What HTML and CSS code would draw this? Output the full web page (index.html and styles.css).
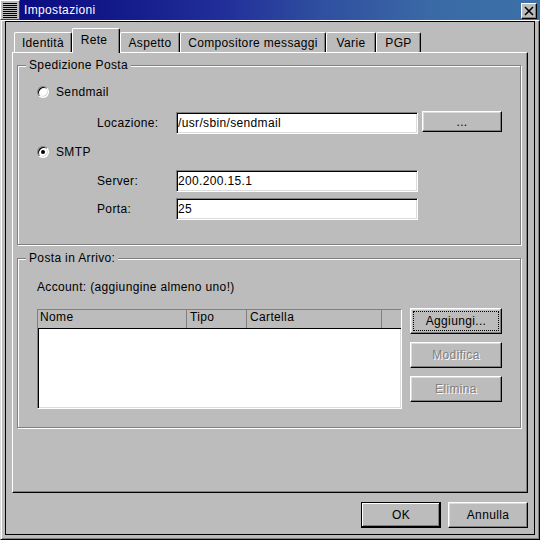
FILE: index.html
```html
<!DOCTYPE html>
<html lang="it">
<head>
<meta charset="utf-8">
<title>Impostazioni</title>
<link rel="stylesheet" href="styles.css">
</head>
<body>
<div class="window">
  <div class="titlebar">
    <div class="menu-btn"><span class="menu-lines"></span></div>
    <div class="title">Impostazioni</div>
    <div class="close-btn"><svg width="10" height="10" viewBox="0 0 10 10"><path d="M1 1L9 9M9 1L1 9" stroke="#000" stroke-width="1.6" fill="none"/></svg></div>
  </div>
  <div class="frame">
    <div class="client">
      <div class="tabs">
        <div class="tab t-identita">Identità</div>
        <div class="tab t-rete active">Rete</div>
        <div class="tab t-aspetto">Aspetto</div>
        <div class="tab t-compositore">Compositore messaggi</div>
        <div class="tab t-varie">Varie</div>
        <div class="tab t-pgp">PGP</div>
      </div>
      <div class="panel">
        <div class="group group-send">
          <div class="group-title">Spedizione Posta</div>
          <div class="row radio-row row-sendmail"><span class="radio"></span><span>Sendmail</span></div>
          <div class="row field-row row-loc"><span class="field-label">Locazione:</span><input class="input" type="text" value="/usr/sbin/sendmail"><button class="btn btn-browse">...</button></div>
          <div class="row radio-row row-smtp"><span class="radio checked"></span><span>SMTP</span></div>
          <div class="row field-row row-server"><span class="field-label">Server:</span><input class="input" type="text" value="200.200.15.1"></div>
          <div class="row field-row row-porta"><span class="field-label">Porta:</span><input class="input" type="text" value="25"></div>
        </div>
        <div class="group group-recv">
          <div class="group-title">Posta in Arrivo:</div>
          <div class="account-label">Account: (aggiungine almeno uno!)</div>
          <div class="accounts">
            <div class="listview">
              <div class="lv-header">
                <div class="lv-col c-nome">Nome</div>
                <div class="lv-col c-tipo">Tipo</div>
                <div class="lv-col c-cartella">Cartella</div>
                <div class="lv-col c-rest"></div>
              </div>
              <div class="lv-body"></div>
            </div>
            <div class="side-buttons">
              <button class="btn btn-side focus">Aggiungi...</button>
              <button class="btn btn-side" disabled>Modifica</button>
              <button class="btn btn-side" disabled>Elimina</button>
            </div>
          </div>
        </div>
      </div>
      <div class="dialog-buttons">
        <button class="btn btn-dialog btn-default">OK</button>
        <button class="btn btn-dialog">Annulla</button>
      </div>
    </div>
  </div>
</div>
</body>
</html>
```
FILE: styles.css
```css
* { box-sizing: border-box; }
html, body { margin: 0; padding: 0; }
body {
  width: 540px;
  height: 540px;
  overflow: hidden;
  background: #bcbcbc;
  font-family: "Liberation Sans", Arial, sans-serif;
  font-size: 12px;
  letter-spacing: 0.35px;
  color: #000;
}
.window {
  width: 540px;
  height: 540px;
  display: flex;
  flex-direction: column;
}

/* Title bar */
.titlebar {
  height: 20px;
  display: flex;
  align-items: flex-start;
  background: linear-gradient(to right, #0a0a84 0%, #121888 20%, #22309a 42%, #3050a0 60%, #3a6aa6 80%, #3c70a6 100%);
  padding-right: 3px;
}
.menu-btn {
  width: 20px;
  height: 20px;
  background: #bcbcbc;
  border: 1px solid;
  border-color: #fff #404040 #404040 #fff;
  display: flex;
  align-items: center;
  justify-content: center;
}
.menu-lines {
  width: 14px;
  height: 15px;
  background: repeating-linear-gradient(to bottom, #000 0 1px, #bcbcbc 1px 2px);
}
.title {
  flex: 1;
  color: #fff;
  padding-left: 4px;
  line-height: 20px;
}
.close-btn {
  width: 16px;
  height: 16px;
  margin-top: 3px;
  background: #bcbcbc;
  border: 1px solid;
  border-color: #fff #000 #000 #fff;
  box-shadow: inset -1px -1px #808080;
  display: flex;
  align-items: center;
  justify-content: center;
}

/* Window frame */
.frame {
  flex: 1;
  display: flex;
  border-top: 1px solid #fff;
  border-left: 1px solid #dcdcdc;
  border-right: 1px solid #000;
  border-bottom: 1px solid #000;
  box-shadow: inset 1px 0 #fff, inset -1px -1px #808080;
  padding: 0 4px 4px 4px;
}
.client {
  flex: 1;
  border: 1px solid #000;
  padding: 6px;
  display: flex;
  flex-direction: column;
}

/* Tabs */
.tabs {
  height: 24px;
  display: flex;
  align-items: flex-end;
  padding-left: 2px;
}
.tab {
  height: 20px;
  display: flex;
  align-items: center;
  justify-content: center;
  border-top: 1px solid #fff;
  border-left: 1px solid #fff;
  border-right: 1px solid #000;
  box-shadow: inset -1px 0 #808080;
  border-top-left-radius: 2px;
  border-top-right-radius: 2px;
  white-space: nowrap;
}
.tab.active {
  height: 25px;
  margin-bottom: -1px;
  position: relative;
  z-index: 1;
  background: #bcbcbc;
  padding-bottom: 2px;
  padding-right: 4px;
}
.t-identita { width: 58px; }
.t-rete { width: 48px; }
.t-aspetto { width: 60px; }
.t-compositore { width: 146px; }
.t-varie { width: 50px; }
.t-pgp { width: 45px; }

/* Tab panel */
.panel {
  flex: 1;
  border: 1px solid;
  border-color: #fff #000 #000 #fff;
  box-shadow: inset -1px -1px #808080;
  padding: 12px 6px 0 4px;
}

/* Group boxes */
.group {
  border: 1px solid #808080;
  box-shadow: inset 1px 1px #fff, 1px 1px #fff;
}
.group-title {
  width: fit-content;
  margin: -8px 0 0 8px;
  padding: 0 3px;
  line-height: 14px;
  background: #bcbcbc;
}
.group-send { padding-bottom: 24px; }
.group-recv { margin-top: 13px; padding-bottom: 18px; }

.row {
  height: 22px;
  display: flex;
  align-items: center;
}
.radio-row { padding-left: 19px; }
.radio-row .radio { margin-right: 7px; }
.row-sendmail { margin-top: 9px; }
.row-loc { margin-top: 9px; }
.row-smtp { margin-top: 7px; }
.row-server { margin-top: 7px; }
.row-porta { margin-top: 6px; }
.field-row { padding-left: 79px; }
.field-label { width: 79px; }

.radio {
  width: 12px;
  height: 12px;
  border-radius: 50%;
  border: 1px solid;
  border-color: #808080 #fff #fff #808080;
  box-shadow: inset 1px 1px #000, inset -1px -1px #dcdcdc;
  background: #fff;
  display: flex;
  align-items: center;
  justify-content: center;
}
.radio.checked::after {
  content: "";
  width: 4px;
  height: 4px;
  border-radius: 50%;
  background: #000;
}

.input {
  width: 242px;
  height: 22px;
  margin: 0;
  padding: 0 0 0 1px;
  border: 1px solid;
  border-color: #808080 #fff #fff #808080;
  box-shadow: inset 1px 1px #000, inset -1px -1px #dcdcdc;
  background: #fff;
  font: inherit;
  letter-spacing: inherit;
  color: #000;
  outline: none;
}

/* Buttons */
.btn {
  font: inherit;
  letter-spacing: inherit;
  color: #000;
  background: #bcbcbc;
  margin: 0;
  padding: 0;
  border: 1px solid;
  border-color: #fff #000 #000 #fff;
  box-shadow: inset -1px -1px #808080, inset 1px 1px #dcdcdc;
  outline: none;
}
.btn:disabled {
  color: #808080;
  text-shadow: 1px 1px #fff;
}
.btn-browse {
  width: 80px;
  height: 21px;
  margin-left: 4px;
  align-self: flex-start;
  margin-top: -1px;
}
.btn.focus {
  outline: 1px dotted #000;
  outline-offset: -4px;
}
.btn-default {
  border: 1px solid #000;
  box-shadow: inset -1px -1px #000, inset 1px 1px #fff, inset -2px -2px #808080;
}

/* Incoming mail */
.account-label {
  margin-top: 15px;
  padding-left: 19px;
  line-height: 14px;
}
.accounts {
  display: flex;
  align-items: flex-start;
  margin-top: 14px;
  padding-left: 19px;
}
.listview {
  width: 365px;
  height: 100px;
  margin-top: 1px;
  border: 1px solid;
  border-color: #808080 #fff #fff #808080;
  box-shadow: inset 1px 1px #000, inset -1px -1px #dcdcdc;
  background: #fff;
  display: flex;
  flex-direction: column;
}
.lv-header {
  height: 19px;
  display: flex;
  background: #bcbcbc;
  border-bottom: 1px solid #000;
}
.lv-col {
  border-right: 1px solid #808080;
  padding-left: 2px;
  line-height: 15px;
}
.c-nome { width: 149px; }
.c-tipo { width: 60px; padding-left: 3px; }
.c-cartella { width: 135px; padding-left: 3px; }
.c-rest { flex: 1; border-right: none; }
.lv-body { flex: 1; }

.side-buttons {
  display: flex;
  flex-direction: column;
  gap: 8px;
  margin-left: 8px;
}
.btn-side {
  width: 92px;
  height: 26px;
}

/* Dialog buttons */
.dialog-buttons {
  display: flex;
  justify-content: flex-end;
  gap: 7px;
  margin-top: 9px;
}
.btn-dialog {
  width: 80px;
  height: 26px;
}
```
